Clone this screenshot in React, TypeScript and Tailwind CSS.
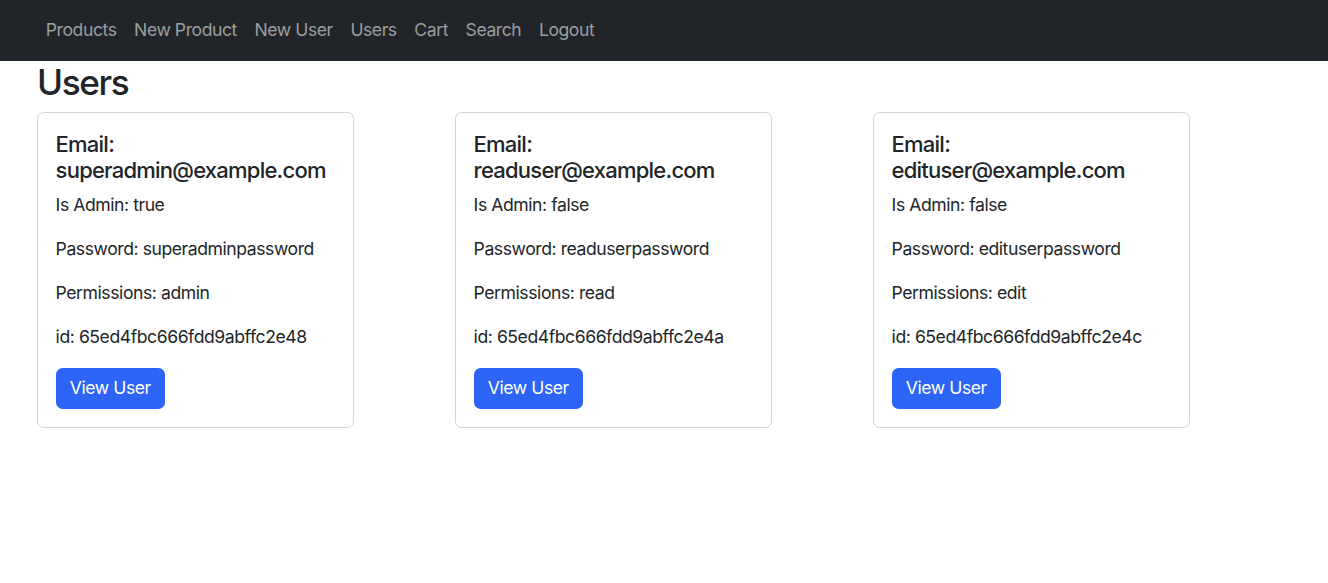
import React from 'react';

const users = [
    {
        email: 'superadmin@example.com',
        isAdmin: 'true',
        password: 'superadminpassword',
        permissions: 'admin',
        id: '65ed4fbc666fdd9abffc2e48',
    },
    {
        email: 'readuser@example.com',
        isAdmin: 'false',
        password: 'readuserpassword',
        permissions: 'read',
        id: '65ed4fbc666fdd9abffc2e4a',
    },
    {
        email: 'edituser@example.com',
        isAdmin: 'false',
        password: 'edituserpassword',
        permissions: 'edit',
        id: '65ed4fbc666fdd9abffc2e4c',
    },
];

const links = ['Products', 'New Product', 'New User', 'Users', 'Cart', 'Search', 'Logout'];

export default function App() {
    return (
        <div className="min-h-[583px] bg-white text-[#212529] font-['Inter',sans-serif] text-[17.6px] leading-[26.4px] tracking-[-0.025em]">
            <NavBar />
            <main className="mx-auto w-[1254px]">
                <h2 className="mb-[8.8px] text-[35.2px] leading-[42.24px] font-medium tracking-[-0.04em]">
                    Users
                </h2>
                <div className="grid grid-cols-3">
                    {users.map((user) => (
                        <UserCard key={user.id} {...user} />
                    ))}
                </div>
            </main>
        </div>
    );
}

function NavBar() {
    return (
        <nav className="h-[61px] bg-[#212529] flex items-center pl-[37px]">
            <ul className="flex">
                {links.map((link) => (
                    <li key={link}>
                        <a href="#" className="block px-[8.8px] text-[#9b9d9f]">
                            {link}
                        </a>
                    </li>
                ))}
            </ul>
        </nav>
    );
}

function UserCard({
    email,
    isAdmin,
    password,
    permissions,
    id,
}: {
    email: string;
    isAdmin: string;
    password: string;
    permissions: string;
    id: string;
}) {
    return (
        <div className="w-[317px] rounded-[6.6px] border border-[#d3d4d5] p-[17.6px]">
            <h5 className="mb-[8.8px] text-[22px] leading-[26.4px] font-medium tracking-[-0.035em]">
                Email: {email}
            </h5>
            <p className="mb-[17.6px]">Is Admin: {isAdmin}</p>
            <p className="mb-[17.6px]">Password: {password}</p>
            <p className="mb-[17.6px]">Permissions: {permissions}</p>
            <p className="mb-[17.6px]">id: {id}</p>
            <button className="rounded-[6.6px] bg-[#2c64f6] px-[14.2px] py-[7.2px] text-white">
                View User
            </button>
        </div>
    );
}
